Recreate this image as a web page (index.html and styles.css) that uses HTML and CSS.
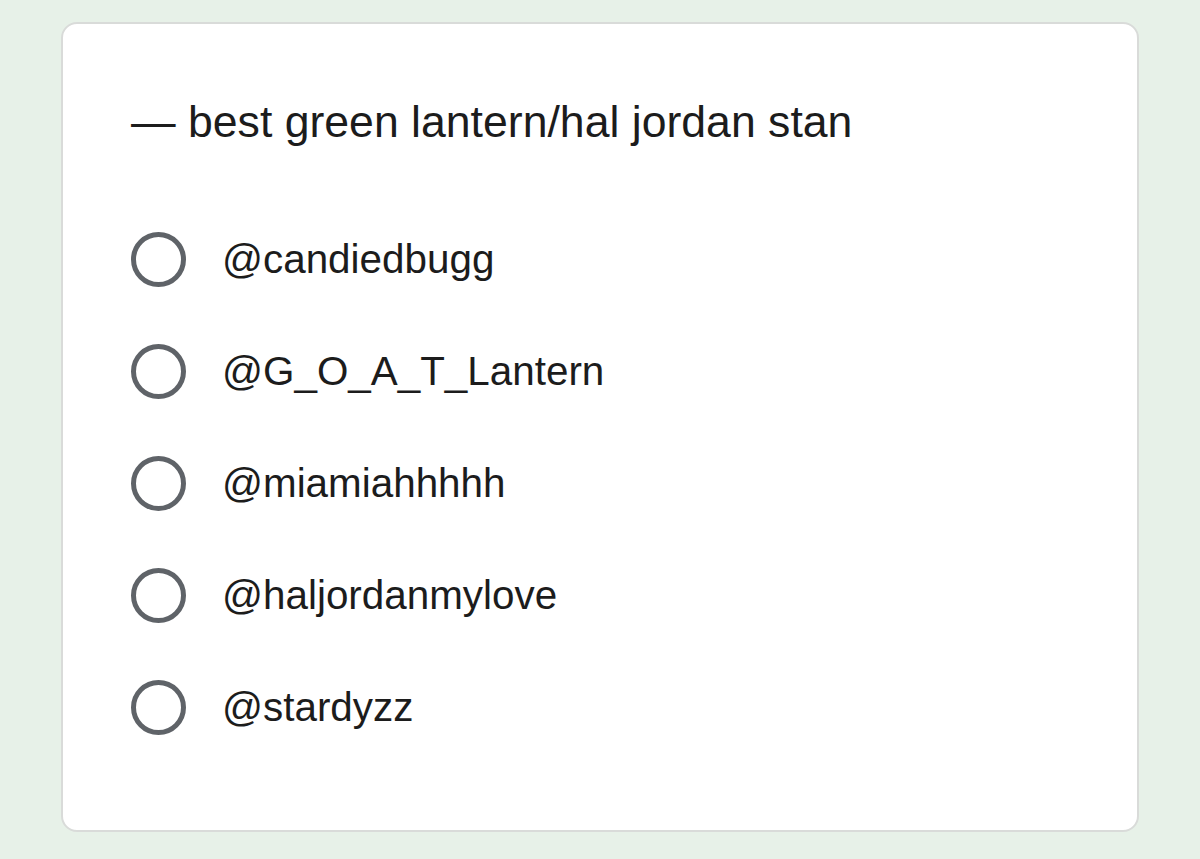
FILE: index.html
```html
<!DOCTYPE html>
<html lang="en">
<head>
    <meta charset="UTF-8">
    <meta name="viewport" content="width=device-width, initial-scale=1.0">
    <title>Poll</title>
    <link rel="stylesheet" href="styles.css">
</head>
<body>
    <form class="poll-card">
        <h2 class="poll-title">— best green lantern/hal jordan stan</h2>
        <div class="poll-options">
            <label class="option">
                <input type="radio" name="stan" value="candiedbugg">
                <span>@candiedbugg</span>
            </label>
            <label class="option">
                <input type="radio" name="stan" value="G_O_A_T_Lantern">
                <span>@G_O_A_T_Lantern</span>
            </label>
            <label class="option">
                <input type="radio" name="stan" value="miamiahhhhh">
                <span>@miamiahhhhh</span>
            </label>
            <label class="option">
                <input type="radio" name="stan" value="haljordanmylove">
                <span>@haljordanmylove</span>
            </label>
            <label class="option">
                <input type="radio" name="stan" value="stardyzz">
                <span>@stardyzz</span>
            </label>
        </div>
    </form>
</body>
</html>
```

FILE: styles.css
```css
body {
    margin: 0;
    padding: 22px 61px 27px;
    background-color: #e7f1e8;
    font-family: "Liberation Sans", Arial, sans-serif;
    color: #1c1c1c;
}
.poll-card {
    background-color: #ffffff;
    border: 2px solid #d9dbd9;
    border-radius: 16px;
    padding: 73px 68px 66px;
    box-sizing: border-box;
    height: 810px;
}
.poll-title {
    margin: 0 0 56px;
    font-size: 44.6px;
    font-weight: normal;
    line-height: 50px;
}
.option {
    display: flex;
    align-items: center;
    height: 112px;
    font-size: 40.4px;
    line-height: 46px;
    cursor: pointer;
}
.option input {
    appearance: none;
    -webkit-appearance: none;
    width: 55px;
    height: 55px;
    margin: 0 36px 0 0;
    border: 5px solid #5f6368;
    border-radius: 50%;
    box-sizing: border-box;
    flex-shrink: 0;
}
.option input:checked {
    border-color: #1a73e8;
    background: radial-gradient(#1a73e8 45%, transparent 48%);
}
```
